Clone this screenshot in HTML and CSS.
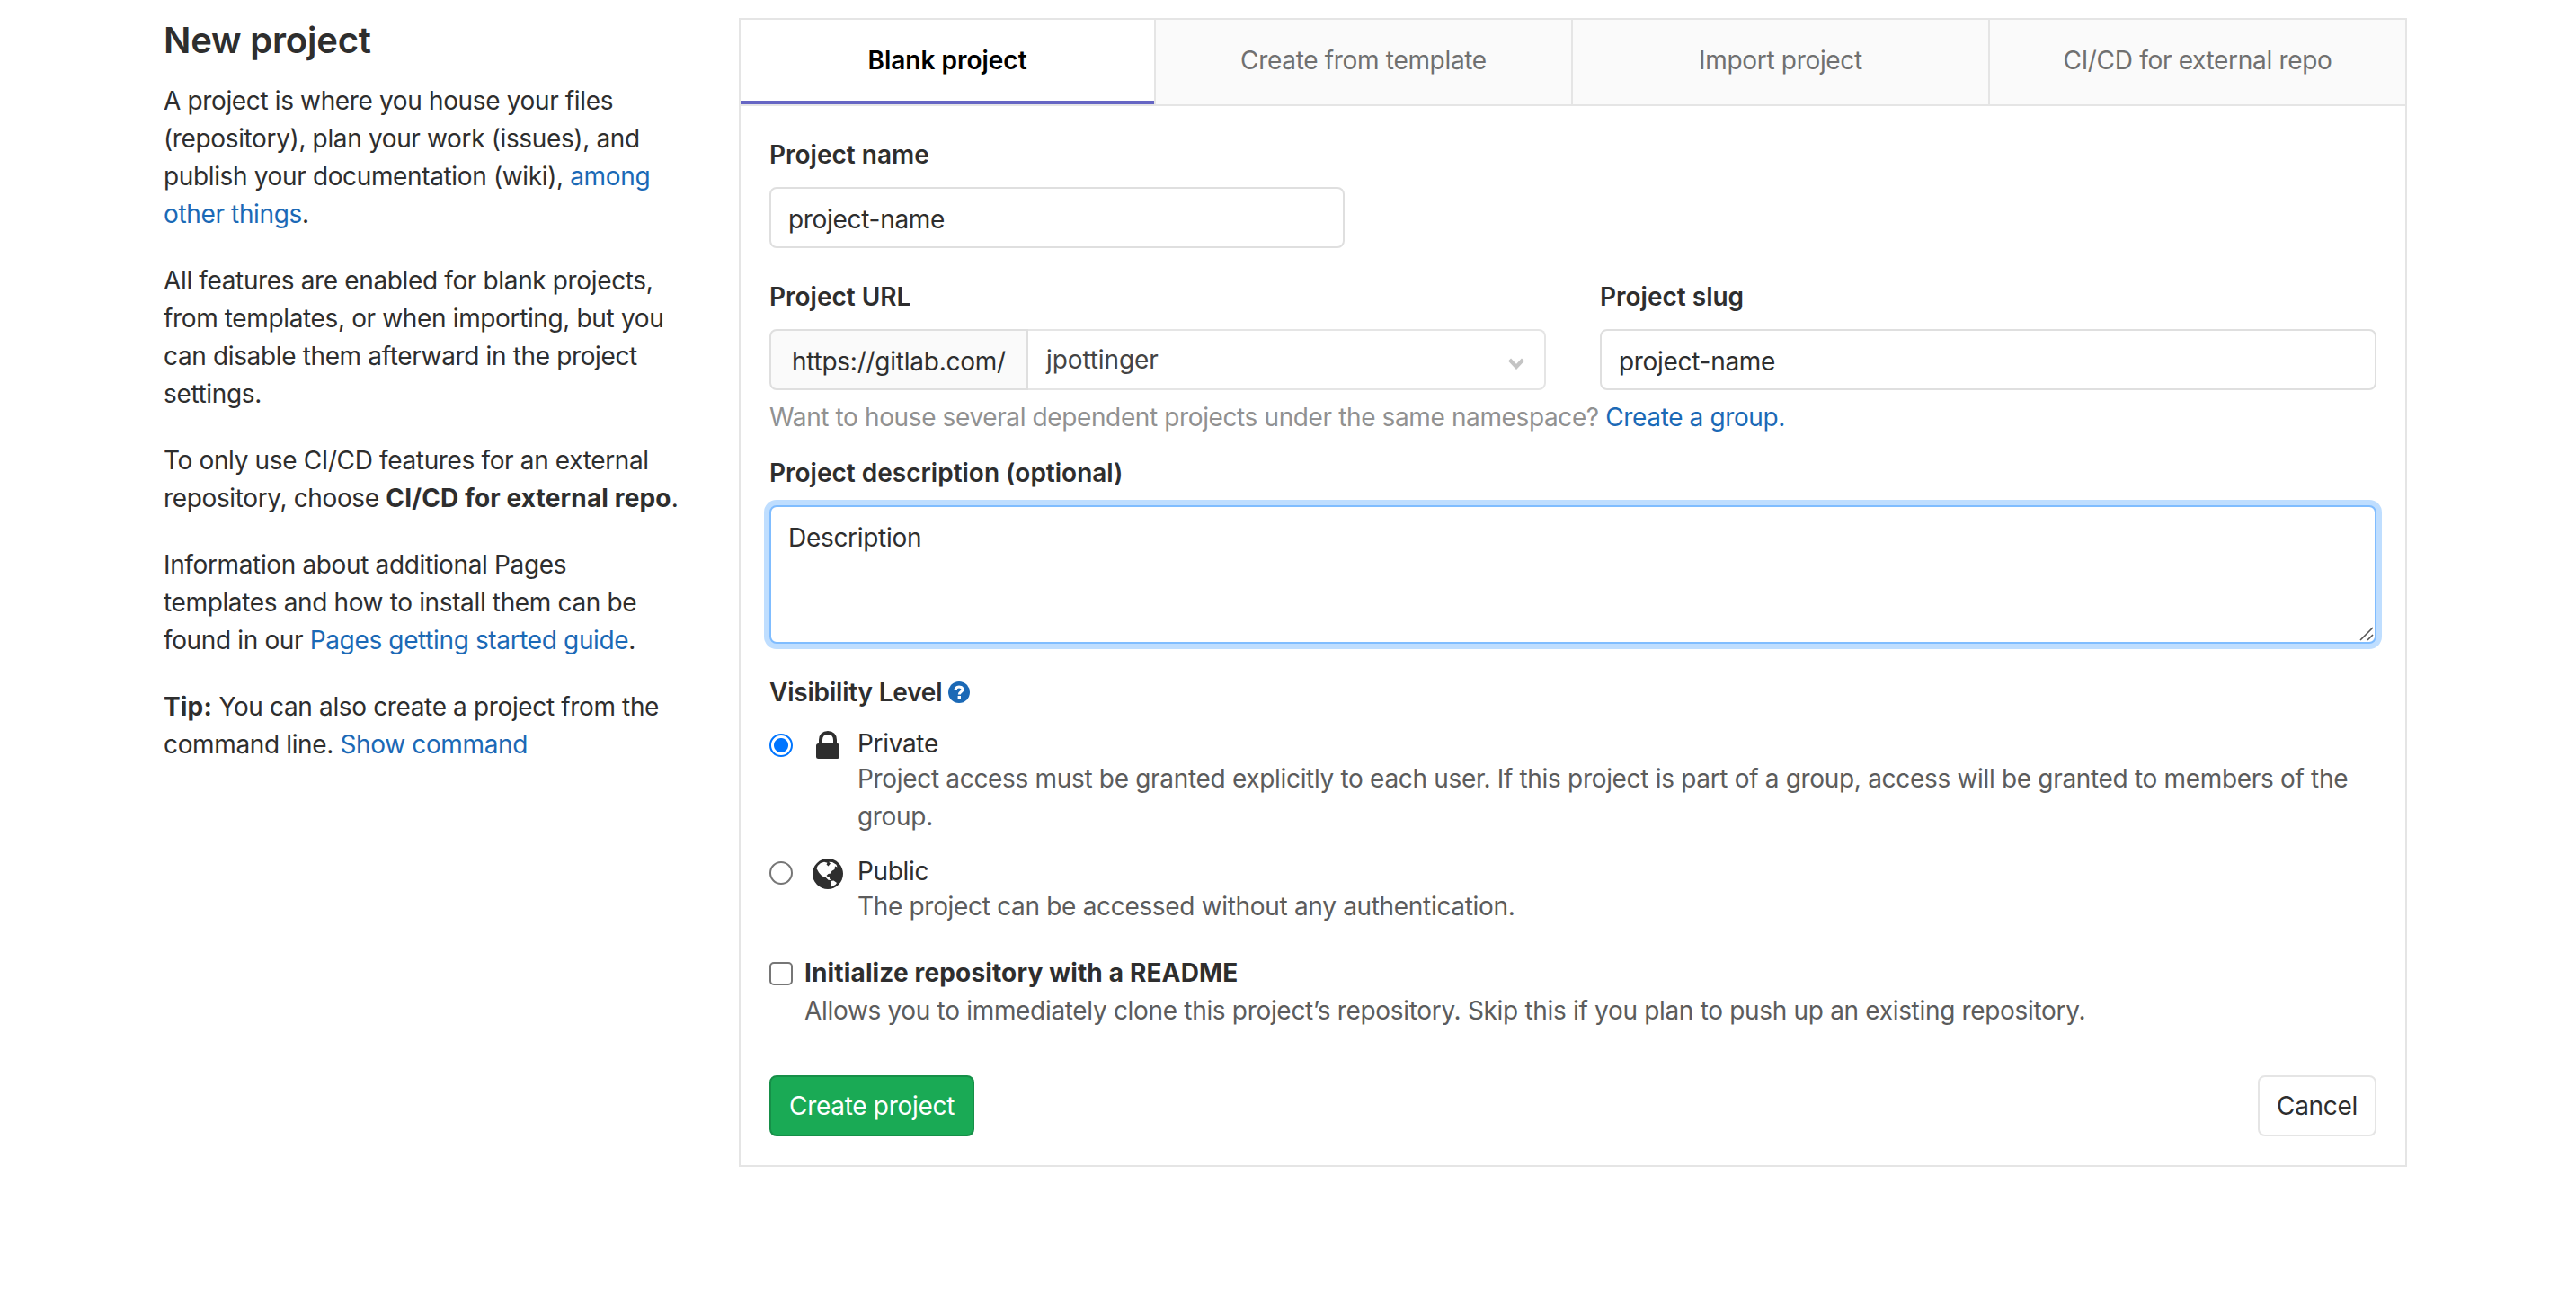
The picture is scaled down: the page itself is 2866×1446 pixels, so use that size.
FILE: index.html
```html
<!DOCTYPE html>
<html lang="en">
<head>
  <meta charset="UTF-8">
  <title>New project</title>
  <link rel="stylesheet" href="styles.css">
</head>
<body>

  <div class="container">
    <div class="sidebar">
      <h4>New project</h4>
      <p>A project is where you house your files<br>(repository), plan your work (issues), and<br>publish your documentation (wiki), <a href="#">among<br>other things</a>.</p>
      <p>All features are enabled for blank projects,<br>from templates, or when importing, but you<br>can disable them afterward in the project<br>settings.</p>
      <p>To only use CI/CD features for an external<br>repository, choose <strong>CI/CD for external repo</strong>.</p>
      <p>Information about additional Pages<br>templates and how to install them can be<br>found in our <a href="#">Pages getting started guide</a>.</p>
      <p><strong>Tip:</strong> You can also create a project from the<br>command line. <a href="#">Show command</a></p>
    </div>

    <div class="panel">
      <div class="tabs">
        <div class="tab active">Blank project</div>
        <div class="tab">Create from template</div>
        <div class="tab">Import project</div>
        <div class="tab">CI/CD for external repo</div>
      </div>

      <form class="pane">
        <div class="form-group">
          <label for="name">Project name</label>
          <input class="form-control name" type="text" id="name" value="project-name">
        </div>

        <div class="row">
          <div class="col-url">
            <label>Project URL</label>
            <div class="input-group">
              <div class="addon">https://gitlab.com/</div>
              <div class="select">
                <span>jpottinger</span>
                <svg class="chevron" viewBox="0 0 18 13"><path d="M1.500 2 L9 10 L16.500 2" fill="none" stroke="#c4c4c4" stroke-width="4.200"/></svg>
              </div>
            </div>
          </div>
          <div class="col-slug">
            <label for="slug">Project slug</label>
            <input class="form-control" type="text" id="slug" value="project-name">
          </div>
        </div>
        <div class="hint">Want to house several dependent projects under the same namespace? <a href="#">Create a group.</a></div>

        <div class="form-group">
          <label for="description">Project description (optional)</label>
          <div class="textarea-wrap">
            <textarea id="description">Description</textarea>
            <svg class="grip" viewBox="0 0 16 16"><path d="M1 15 L15 1 M9 15 L15 9" stroke="#555" stroke-width="1.6"/></svg>
          </div>
        </div>

        <label class="visibility-label">Visibility Level
          <svg class="help" viewBox="0 0 24 24">
            <circle cx="12" cy="12" r="12" fill="#1b69b6"/>
            <path d="M8 9.2 C8.4 6.8 10 5.9 12 5.9 C14.4 5.9 16 7.2 16 9.1 C16 11.6 12.3 11.4 12.3 14.4" fill="none" stroke="#fff" stroke-width="3"/>
            <rect x="10.6" y="16" width="3.4" height="3.4" fill="#fff"/>
          </svg>
        </label>

        <div class="option">
          <input type="radio" name="visibility" checked>
          <svg class="icon" viewBox="0 0 36 36">
            <path d="M10 17 V11 C10 6 13 3 18 3 C23 3 26 6 26 11 V17" fill="none" stroke="#2e2e2e" stroke-width="4"/>
            <rect x="5" y="15" width="26" height="17" rx="2.500" fill="#2e2e2e"/>
          </svg>
          <div class="option-text">
            <div class="option-title">Private</div>
            <div class="option-desc">Project access must be granted explicitly to each user. If this project is part of a group, access will be granted to members of the<br>group.</div>
          </div>
        </div>

        <div class="option">
          <input type="radio" name="visibility">
          <svg class="icon" viewBox="0 0 36 36">
            <circle cx="18" cy="18" r="17" fill="#2e2e2e"/>
            <path d="M5.500 12 L6.800 9 L10 6 L14 4.800 L17.500 5.800 L16.500 7.500 L18.500 9.500 L21 6.500 L19 4.800 L23 5 L27.500 7.800 L28.500 10.500 L26 9.500 L25.500 13 L22.500 14.800 L21 17.500 L18.500 18 L16.500 20 L18.200 21.500 L19.800 20.800 L20 23.500 L21.800 25 L18.500 24.800 L15.500 21.800 L11.500 20.500 L8 16.500 Z" fill="#fff"/>
            <path d="M20.800 26 L24.500 25.500 L28 28 L26.500 30 L21.500 32.800 L22 29.500 Z" fill="#fff"/>
          </svg>
          <div class="option-text">
            <div class="option-title">Public</div>
            <div class="option-desc">The project can be accessed without any authentication.</div>
          </div>
        </div>

        <div class="readme">
          <input type="checkbox">
          <div>
            <strong>Initialize repository with a README</strong>
            <div class="option-desc">Allows you to immediately clone this project’s repository. Skip this if you plan to push up an existing repository.</div>
          </div>
        </div>

        <div class="actions">
          <button type="button" class="btn btn-success">Create project</button>
          <button type="button" class="btn btn-cancel">Cancel</button>
        </div>
      </form>
    </div>
  </div>

</body>
</html>
```
FILE: styles.css
```css
* {
  box-sizing: border-box;
}

body {
  margin: 0;
  background: #fff;
  color: #2e2e2e;
  font-family: Inter, sans-serif;
  font-size: 28px;
  line-height: 42px;
  letter-spacing: -0.32px;
}

a {
  color: #1b69b6;
  text-decoration: none;
}

strong {
  font-weight: 700;
  letter-spacing: 0.15px;
}

.container {
  display: flex;
  padding: 20px 0 0 182px;
}

.sidebar {
  width: 640px;
  letter-spacing: -0.36px;
  white-space: nowrap;
}

.sidebar h4 {
  margin: 1px 0 22px;
  font-size: 40px;
  line-height: 48px;
  font-weight: 600;
  letter-spacing: -0.2px;
}

.sidebar p {
  margin: 0 0 32px;
}

.panel {
  width: 1856px;
  border: 2px solid #e5e5e5;
}

/* Tabs */
.tabs {
  display: flex;
  height: 96px;
  border-bottom: 2px solid #e5e5e5;
}

.tab {
  width: 464px;
  padding-top: 24px;
  border-right: 2px solid #e5e5e5;
  background: #fafafa;
  color: #707070;
  text-align: center;
}

.tab:first-child {
  width: 462px;
}

.tab:last-child {
  width: 462px;
  border-right: none;
}

.tab.active {
  background: #fff;
  color: #000;
  font-weight: 600;
  letter-spacing: 0;
  box-shadow: inset 0 -4px 0 #6666c4;
}

/* Form */
.pane {
  padding: 32px;
}

.form-group {
  margin-bottom: 32px;
}

label {
  display: block;
  margin-bottom: 15px;
  padding-top: 1px;
  font-weight: 600;
  letter-spacing: 0;
}

.form-control {
  display: block;
  width: 100%;
  height: 68px;
  padding: 3px 19px 0;
  border: 2px solid #dfdfdf;
  border-radius: 8px;
  background: #fff;
  color: #2e2e2e;
  font: inherit;
  letter-spacing: -0.3px;
}

.form-control.name {
  width: 640px;
}

.row {
  display: flex;
  gap: 60px;
}

.col-url {
  width: 864px;
}

.col-slug {
  width: 864px;
}

.input-group {
  display: flex;
  height: 68px;
}

.addon {
  width: 288px;
  padding: 13px 0 0 23px;
  border: 2px solid #dfdfdf;
  border-radius: 8px 0 0 8px;
  background: #fafafa;
  letter-spacing: -0.25px;
}

.select {
  display: flex;
  flex: 1;
  justify-content: space-between;
  padding: 11px 22px 0 20px;
  border: 2px solid #e5e5e5;
  border-left: none;
  border-radius: 0 8px 8px 0;
  color: #444;
  letter-spacing: -0.1px;
}

.chevron {
  width: 18px;
  height: 13px;
  margin-top: 19px;
}

.hint {
  margin: 9px 0 19px;
  color: #919191;
  letter-spacing: -0.38px;
}

.textarea-wrap {
  position: relative;
}

textarea {
  display: block;
  width: 100%;
  height: 154px;
  padding: 13px 19px;
  border: 2px solid #80bdff;
  border-radius: 8px;
  outline: none;
  box-shadow: 0 0 0 6px #bfdeff;
  color: #2e2e2e;
  font: inherit;
  letter-spacing: -0.3px;
  resize: none;
}

.grip {
  position: absolute;
  right: 3px;
  bottom: 3px;
  width: 16px;
  height: 16px;
}

.visibility-label {
  display: flex;
  align-items: center;
  gap: 7px;
  margin-bottom: 16px;
  letter-spacing: -0.2px;
}

.help {
  width: 24px;
  height: 24px;
}

.option {
  display: flex;
  margin-bottom: 20px;
}

input[type="radio"],
input[type="checkbox"] {
  appearance: none;
  flex: none;
  width: 26px;
  height: 26px;
  margin: 9px 0 0;
  border: 2px solid #767676;
  background: #fff;
}

input[type="radio"] {
  border-radius: 50%;
}

input[type="radio"]:checked {
  border-color: #0075ff;
  background: radial-gradient(circle, #0075ff 7.500px, #fff 8.500px);
}

input[type="checkbox"] {
  border-radius: 5px;
}

.icon {
  flex: none;
  width: 36px;
  height: 36px;
  margin: 5px 15px 0 21px;
}

.option-title {
  height: 38px;
  line-height: 41px;
}

.option-desc {
  color: #5c5c5c;
  white-space: nowrap;
}

.readme {
  display: flex;
  gap: 13px;
  margin-top: 32px;
}

.actions {
  display: flex;
  justify-content: space-between;
  margin-top: 51px;
}

.btn {
  height: 68px;
  padding: 0;
  border-radius: 8px;
  font: inherit;
  letter-spacing: -0.3px;
}

.btn-success {
  width: 228px;
  border: 2px solid #168f48;
  background: #1aaa55;
  color: #fff;
}

.btn-cancel {
  width: 132px;
  border: 2px solid #e5e5e5;
  background: #fff;
  color: #2e2e2e;
}
```
